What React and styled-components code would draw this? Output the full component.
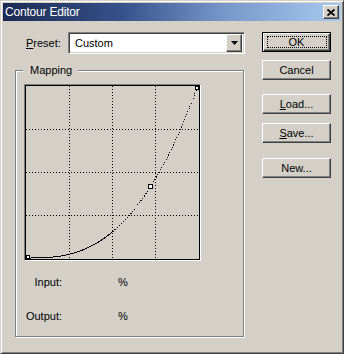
import React from 'react';
import styled, { createGlobalStyle, css } from 'styled-components';

const GlobalStyle = createGlobalStyle`
  html, body {
    margin: 0;
    padding: 0;
    background: #d4d0c8;
  }
  body {
    font-family: 'Liberation Sans', Arial, sans-serif;
    font-size: 11px;
    color: #000;
  }
`;

const raised = css`
  border: 1px solid;
  border-color: #ffffff #404040 #404040 #ffffff;
  box-shadow: inset -1px -1px #808080;
`;

const sunken = css`
  border: 1px solid;
  border-color: #808080 #ffffff #ffffff #808080;
`;

const buildCurve = (from, to) => {
  const pts = [];
  for (let i = 0; i <= 80; i++) {
    const t = from + ((to - from) * i) / 80;
    const x = 2 + 169 * t;
    const y = 172 - 170 * Math.pow(t, 2.7);
    pts.push(`${x.toFixed(2)},${y.toFixed(2)}`);
  }
  return pts.join(' ');
};

const GRID = [43.5, 86.5, 129.5];

const ContourGraph = () => (
  <svg width="173" height="173" viewBox="0 0 173 173" style={{ display: 'block' }}>
    {GRID.map((p) => (
      <g key={p} stroke="#000" strokeWidth="1" strokeDasharray="1 2" shapeRendering="crispEdges">
        <line x1={p} y1="0" x2={p} y2="173" />
        <line x1="0" y1={p} x2="173" y2={p} />
      </g>
    ))}
    <polyline
      points={buildCurve(0, 0.5)}
      fill="none"
      stroke="#000"
      strokeWidth="1"
      shapeRendering="crispEdges"
    />
    <polyline
      points={buildCurve(0.5, 1)}
      fill="none"
      stroke="#000"
      strokeWidth="1"
      strokeDasharray="1.2 1.6"
      shapeRendering="crispEdges"
    />
    <g fill="#fff" stroke="#000" strokeWidth="1" shapeRendering="crispEdges">
      <rect x="0.5" y="169.5" width="3" height="3" />
      <rect x="122.5" y="98.5" width="4" height="4" />
      <rect x="169.5" y="0.5" width="3" height="3" />
    </g>
  </svg>
);

const App = () => {
  return (
    <>
      <GlobalStyle />
      <Frame>
        <TitleBar>
          <Title>Contour Editor</Title>
          <CloseButton>
            <svg width="8" height="7" viewBox="0 0 8 7">
              <path d="M0.5 0.5 L7.5 6.5 M7.5 0.5 L0.5 6.5" stroke="#000" strokeWidth="1.8" />
            </svg>
          </CloseButton>
        </TitleBar>
        <Body>
          <LeftColumn>
            <PresetRow>
              <PresetLabel>
                <u>P</u>reset:
              </PresetLabel>
              <Select>
                <SelectText>Custom</SelectText>
                <DropButton>
                  <svg width="7" height="4" viewBox="0 0 7 4">
                    <path d="M0 0 H7 L3.5 4 Z" fill="#000" />
                  </svg>
                </DropButton>
              </Select>
            </PresetRow>
            <Group>
              <Legend>Mapping</Legend>
              <Graph>
                <Canvas>
                  <ContourGraph />
                </Canvas>
              </Graph>
              <Readouts>
                <ReadLabel>Input:</ReadLabel>
                <span>%</span>
                <ReadLabel>Output:</ReadLabel>
                <span>%</span>
              </Readouts>
            </Group>
          </LeftColumn>
          <ButtonColumn>
            <Button $default $gap={0}>
              <FocusRing />
              OK
            </Button>
            <Button $gap={8}>Cancel</Button>
            <Button $gap={14}>
              <u>L</u>oad...
            </Button>
            <Button $gap={9}>
              <u>S</u>ave...
            </Button>
            <Button $gap={15}>New...</Button>
          </ButtonColumn>
        </Body>
      </Frame>
    </>
  );
};

const Frame = styled.div`
  width: 344px;
  height: 354px;
  box-sizing: border-box;
  background: #d4d0c8;
  border: 1px solid;
  border-color: #d4d0c8 #404040 #404040 #d4d0c8;
  box-shadow: inset 1px 1px #ffffff, inset -1px -1px #808080;
  padding: 2px;
  display: flex;
  flex-direction: column;
  overflow: hidden;
`;

const TitleBar = styled.div`
  height: 18px;
  display: flex;
  align-items: center;
  padding-left: 2px;
  background: linear-gradient(to right, #1c2a52 0%, #37518a 35%, #7696c8 65%, #a8caf0 100%);
`;

const Title = styled.span`
  color: #ffffff;
  font-size: 12px;
  letter-spacing: -0.2px;
  line-height: 18px;
`;

const CloseButton = styled.div`
  ${raised};
  box-sizing: border-box;
  background: #d4d0c8;
  width: 16px;
  height: 14px;
  margin-left: auto;
  margin-right: 2px;
  display: flex;
  align-items: center;
  justify-content: center;
`;

const Body = styled.div`
  display: flex;
  gap: 17px;
  padding: 11px 0 0 12px;
`;

const LeftColumn = styled.div`
  width: 230px;
  display: flex;
  flex-direction: column;
`;

const PresetRow = styled.div`
  display: flex;
  align-items: center;
  padding-left: 11px;
  height: 22px;
`;

const PresetLabel = styled.span`
  width: 42px;
`;

const Select = styled.div`
  ${sunken};
  flex: 1;
  height: 22px;
  box-sizing: border-box;
  box-shadow: inset 1px 1px #404040, inset -1px -1px #d4d0c8;
  background: #ffffff;
  display: flex;
  align-items: center;
  padding: 2px;
`;

const SelectText = styled.span`
  flex: 1;
  padding-left: 4px;
`;

const DropButton = styled.div`
  ${raised};
  box-sizing: border-box;
  background: #d4d0c8;
  width: 16px;
  height: 18px;
  display: flex;
  align-items: center;
  justify-content: center;
`;

const Group = styled.div`
  position: relative;
  margin-top: 16px;
  width: 229px;
  height: 267px;
  box-sizing: border-box;
  border: 1px solid #808080;
  box-shadow: inset 1px 1px #ffffff, 1px 1px #ffffff;
  padding-top: 13px;
`;

const Legend = styled.span`
  position: absolute;
  top: -8px;
  left: 7px;
  padding: 0 6px 0 7px;
  line-height: 14px;
  background: #d4d0c8;
`;

const Graph = styled.div`
  ${sunken};
  margin-left: 8px;
  width: 177px;
  box-sizing: border-box;
`;

const Canvas = styled.div`
  border: 1px solid #000;
`;

const Readouts = styled.div`
  display: grid;
  grid-template-columns: 46px auto;
  column-gap: 56px;
  row-gap: 21px;
  margin-top: 15px;
  line-height: 13px;
`;

const ReadLabel = styled.span`
  text-align: right;
`;

const ButtonColumn = styled.div`
  width: 69px;
  display: flex;
  flex-direction: column;
`;

const Button = styled.div`
  position: relative;
  height: 20px;
  box-sizing: border-box;
  margin-top: ${(p) => p.$gap}px;
  display: flex;
  align-items: center;
  justify-content: center;
  ${(p) =>
    p.$default
      ? css`
          border: 1px solid #000;
          box-shadow: inset 1px 1px #ffffff, inset -1px -1px #404040, inset -2px -2px #808080;
        `
      : raised};
`;

const FocusRing = styled.span`
  position: absolute;
  top: 3px;
  left: 4px;
  right: 3px;
  bottom: 3px;
  border: 1px dotted #000;
`;

export default App;
